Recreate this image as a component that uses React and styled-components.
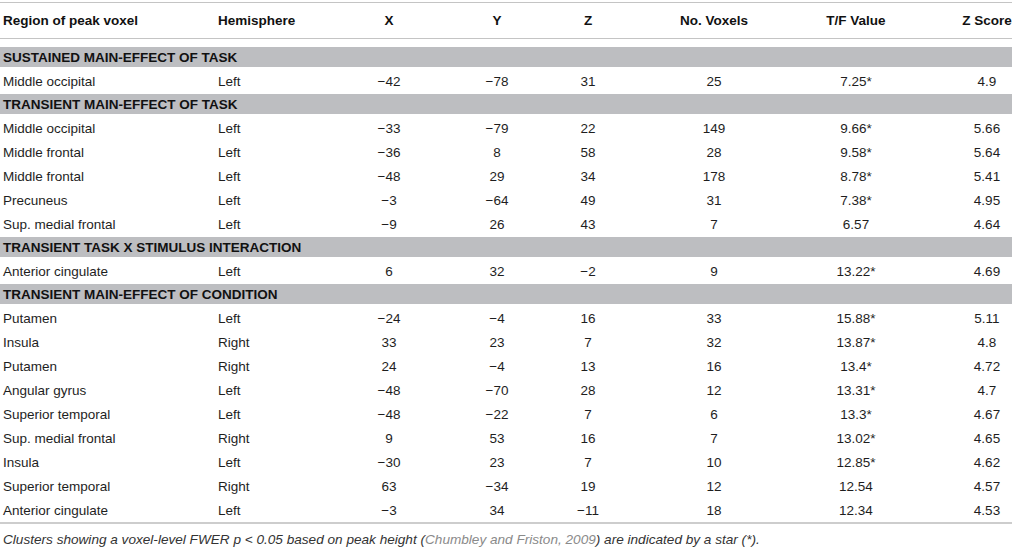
import React from 'react';
import styled, { createGlobalStyle } from 'styled-components';

/*
* Data.
*/

const columns = [
  { label: 'Region of peak voxel', width: 215, align: 'left', padLeft: 3 },
  { label: 'Hemisphere', width: 120, align: 'left', padLeft: 3 },
  { label: 'X', width: 108, align: 'center' },
  { label: 'Y', width: 108, align: 'center' },
  { label: 'Z', width: 74, align: 'center' },
  { label: 'No. Voxels', width: 178, align: 'center' },
  { label: 'T/F Value', width: 159, align: 'center', padRight: 53 },
  { label: 'Z Score', width: 50, align: 'center' },
];

const sections = [
  {
    title: 'SUSTAINED MAIN-EFFECT OF TASK',
    rows: [['Middle occipital', 'Left', '−42', '−78', '31', '25', '7.25*', '4.9']],
  },
  {
    title: 'TRANSIENT MAIN-EFFECT OF TASK',
    rows: [
      ['Middle occipital', 'Left', '−33', '−79', '22', '149', '9.66*', '5.66'],
      ['Middle frontal', 'Left', '−36', '8', '58', '28', '9.58*', '5.64'],
      ['Middle frontal', 'Left', '−48', '29', '34', '178', '8.78*', '5.41'],
      ['Precuneus', 'Left', '−3', '−64', '49', '31', '7.38*', '4.95'],
      ['Sup. medial frontal', 'Left', '−9', '26', '43', '7', '6.57', '4.64'],
    ],
  },
  {
    title: 'TRANSIENT TASK X STIMULUS INTERACTION',
    rows: [['Anterior cingulate', 'Left', '6', '32', '−2', '9', '13.22*', '4.69']],
  },
  {
    title: 'TRANSIENT MAIN-EFFECT OF CONDITION',
    rows: [
      ['Putamen', 'Left', '−24', '−4', '16', '33', '15.88*', '5.11'],
      ['Insula', 'Right', '33', '23', '7', '32', '13.87*', '4.8'],
      ['Putamen', 'Right', '24', '−4', '13', '16', '13.4*', '4.72'],
      ['Angular gyrus', 'Left', '−48', '−70', '28', '12', '13.31*', '4.7'],
      ['Superior temporal', 'Left', '−48', '−22', '7', '6', '13.3*', '4.67'],
      ['Sup. medial frontal', 'Right', '9', '53', '16', '7', '13.02*', '4.65'],
      ['Insula', 'Left', '−30', '23', '7', '10', '12.85*', '4.62'],
      ['Superior temporal', 'Right', '63', '−34', '19', '12', '12.54', '4.57'],
      ['Anterior cingulate', 'Left', '−3', '34', '−11', '18', '12.34', '4.53'],
    ],
  },
];


/*
* App component definition.
*/

export default function App() {
  return (
    <>
      <GlobalStyle />
      <StyledPage>
        <StyledTable>
          <colgroup>
            {columns.map((col) => (
              <col key={col.label} style={{ width: col.width }} />
            ))}
          </colgroup>
          <thead>
            <tr>
              {columns.map((col) => (
                <StyledHeadCell
                  key={col.label}
                  $align={col.align}
                  $padLeft={col.padLeft}
                  $padRight={col.padRight}
                >
                  {col.label}
                </StyledHeadCell>
              ))}
            </tr>
          </thead>
          <tbody>
            {sections.map((section, i) => (
              <React.Fragment key={section.title}>
                <tr>
                  <StyledSectionCell colSpan={columns.length} $first={i === 0}>
                    <StyledSectionBar>{section.title}</StyledSectionBar>
                  </StyledSectionCell>
                </tr>
                {section.rows.map((row, j) => (
                  <tr key={j}>
                    {row.map((value, k) => (
                      <StyledCell
                        key={k}
                        $align={columns[k].align}
                        $padLeft={columns[k].padLeft}
                        $padRight={columns[k].padRight}
                      >
                        {value}
                      </StyledCell>
                    ))}
                  </tr>
                ))}
              </React.Fragment>
            ))}
          </tbody>
        </StyledTable>
        <StyledFootnote>
          Clusters showing a voxel-level FWER p &lt; 0.05 based on peak height (
          <StyledCitation>Chumbley and Friston, 2009</StyledCitation>) are indicated by a star (*).
        </StyledFootnote>
      </StyledPage>
    </>
  );
}


/*
* Styles
*/

const GlobalStyle = createGlobalStyle`
  body {
    margin: 0;
    background: #ffffff;
    font-family: "Liberation Sans", Arial, sans-serif;
    color: #1e1e1e;
  }
`;

const StyledPage = styled.div`
  width: 1013px;
  padding-top: 2px;
`;

const StyledTable = styled.table`
  width: 1012px;
  table-layout: fixed;
  border-collapse: separate;
  border-spacing: 0;
  border-bottom: 2px solid #cdcdcd;
  font-size: 13.5px;
`;

const StyledHeadCell = styled.th`
  height: 35px;
  padding: 0 ${({ $padRight }) => $padRight || 0}px 0 ${({ $padLeft }) => $padLeft || 0}px;
  border-top: 1px solid #c4c4c4;
  border-bottom: 1px solid #c4c4c4;
  text-align: ${({ $align }) => $align};
  font-weight: bold;
  color: #111111;
  white-space: nowrap;
`;

const StyledSectionCell = styled.td`
  padding: ${({ $first }) => ($first ? '8px' : '1px')} 0 2px;
`;

const StyledSectionBar = styled.div`
  height: 20px;
  padding-left: 3px;
  background: #bdbec1;
  line-height: 21px;
  font-weight: bold;
  color: #111111;
  white-space: nowrap;
`;

const StyledCell = styled.td`
  height: 24px;
  padding: 0 ${({ $padRight }) => $padRight || 0}px 0 ${({ $padLeft }) => $padLeft || 0}px;
  text-align: ${({ $align }) => $align};
  vertical-align: middle;
  white-space: nowrap;
`;

const StyledFootnote = styled.p`
  margin: 8px 0 0 3px;
  font-size: 13.6px;
  font-style: italic;
  line-height: 16px;
  color: #333333;
  white-space: nowrap;
`;

const StyledCitation = styled.span`
  color: #8a8a8a;
`;
